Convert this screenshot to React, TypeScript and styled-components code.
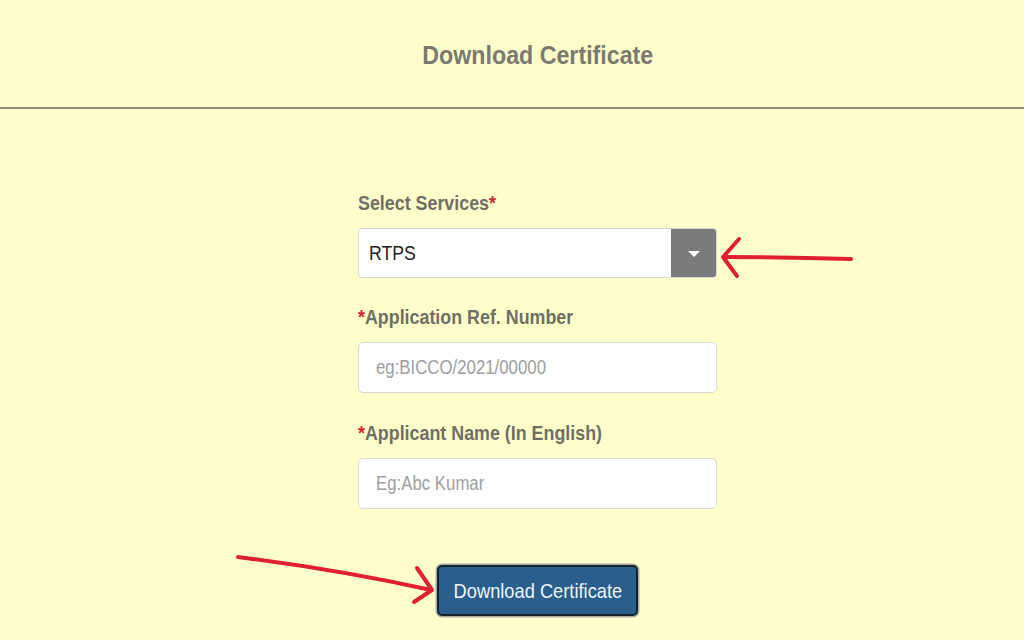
import React from "react";
import styled, { createGlobalStyle } from "styled-components";

const GlobalStyle = createGlobalStyle`
  html, body {
    margin: 0;
    padding: 0;
    background: #ffffcc;
  }
  body {
    font-family: "Liberation Sans", Arial, sans-serif;
  }
  * { box-sizing: border-box; }
`;

const Page = styled.div`
  position: relative;
  width: 1024px;
  height: 640px;
  overflow: hidden;
  background: #ffffcc;
`;

const Header = styled.header`
  height: 109px;
  display: flex;
  align-items: center;
  justify-content: center;
  padding-left: 51px;
  padding-top: 4px;
  border-bottom: 2px solid #8b8b82;
`;

const Title = styled.h1`
  margin: 0;
  font-size: 26.5px;
  font-weight: 700;
  color: #7a7a71;
  display: inline-block;
  transform: scaleX(0.876);
  transform-origin: center;
  white-space: nowrap;
`;

const Main = styled.main`
  display: flex;
  justify-content: center;
  padding-left: 51px;
  padding-top: 82px;
`;

const Form = styled.form`
  width: 359px;
  display: flex;
  flex-direction: column;
`;

const Field = styled.div<{ $gapTop?: number }>`
  display: flex;
  flex-direction: column;
  gap: 13px;
  margin-top: ${(p) => p.$gapTop ?? 0}px;
`;

const Label = styled.label`
  display: block;
  height: 24px;
  line-height: 24px;
  font-size: 21px;
  font-weight: 700;
  color: #6f6f65;
  white-space: nowrap;
`;

const Squeeze = styled.span<{ $origin?: string; $scale?: number }>`
  display: inline-block;
  transform: scaleX(${(p) => p.$scale ?? 0.85});
  transform-origin: ${(p) => p.$origin ?? "left"};
  white-space: nowrap;
`;

const Star = styled.span`
  color: #d8202a;
`;

const SelectBox = styled.div`
  height: 50px;
  display: flex;
  align-items: stretch;
  background: #ffffff;
  border: 1px solid #d6d6d0;
  border-radius: 4px;
  overflow: hidden;
`;

const SelectValue = styled.div`
  flex: 1;
  display: flex;
  align-items: center;
  padding-left: 10px;
  font-size: 21px;
  color: #222222;
`;

const SelectButton = styled.div`
  width: 45px;
  background: #7b7b7b;
  display: flex;
  align-items: center;
  justify-content: center;
`;

const Caret = styled.span`
  width: 0;
  height: 0;
  border-left: 6px solid transparent;
  border-right: 6px solid transparent;
  border-top: 6px solid #ffffff;
  margin-top: 2px;
`;

const InputBox = styled.div`
  height: 51px;
  background: #ffffff;
  border: 1px solid #d9d9d4;
  border-radius: 5px;
  overflow: hidden;
  display: flex;
  align-items: center;
`;

const INPUT_SCALE = 0.84;

const TextInput = styled.input`
  width: ${100 / INPUT_SCALE}%;
  flex: none;
  height: 100%;
  border: none;
  outline: none;
  background: transparent;
  padding: 0 0 0 ${17 / INPUT_SCALE}px;
  font-family: "Liberation Sans", Arial, sans-serif;
  font-size: 20px;
  color: #333333;
  transform: scaleX(${INPUT_SCALE});
  transform-origin: left center;
  &::placeholder {
    color: #a0a0a0;
  }
`;

const ButtonRow = styled.div`
  display: flex;
  justify-content: center;
  margin-top: 56px;
`;

const Button = styled.button`
  width: 201px;
  height: 51px;
  background: #2a5e8d;
  color: #eef4fa;
  border: 2px solid #16222e;
  border-radius: 5px;
  box-shadow: 0 0 0 1.5px #a9aba0;
  font-family: "Liberation Sans", Arial, sans-serif;
  font-size: 21px;
  display: flex;
  align-items: center;
  justify-content: center;
  padding: 0;
  cursor: pointer;
`;

const Overlay = styled.svg`
  position: absolute;
  left: 0;
  top: 0;
  pointer-events: none;
`;

export default function App() {
  return (
    <>
      <GlobalStyle />
      <Page>
        <Header>
          <Title>Download Certificate</Title>
        </Header>
        <Main>
          <Form onSubmit={(e) => e.preventDefault()}>
            <Field>
              <Label>
                <Squeeze>
                  Select Services<Star>*</Star>
                </Squeeze>
              </Label>
              <SelectBox>
                <SelectValue>
                  <Squeeze $scale={0.84}>RTPS</Squeeze>
                </SelectValue>
                <SelectButton>
                  <Caret />
                </SelectButton>
              </SelectBox>
            </Field>
            <Field $gapTop={27}>
              <Label>
                <Squeeze>
                  <Star>*</Star>Application Ref. Number
                </Squeeze>
              </Label>
              <InputBox>
                <TextInput placeholder="eg:BICCO/2021/00000" />
              </InputBox>
            </Field>
            <Field $gapTop={28}>
              <Label>
                <Squeeze>
                  <Star>*</Star>Applicant Name (In English)
                </Squeeze>
              </Label>
              <InputBox>
                <TextInput placeholder="Eg:Abc Kumar" />
              </InputBox>
            </Field>
            <ButtonRow>
              <Button type="submit">
                <Squeeze $origin="center" $scale={0.87}>
                  Download Certificate
                </Squeeze>
              </Button>
            </ButtonRow>
          </Form>
        </Main>
        <Overlay width="1024" height="640" viewBox="0 0 1024 640">
          <g
            fill="none"
            stroke="#e0202e"
            strokeWidth="4"
            strokeLinecap="round"
            strokeLinejoin="round"
          >
            <path d="M851 259 Q790 257 724 257" />
            <path d="M739 239 L723 257 L737 276" />
            <path d="M238 557 Q340 570 431 590" />
            <path d="M417 568 L432 590 L414 602" />
          </g>
        </Overlay>
      </Page>
    </>
  );
}
